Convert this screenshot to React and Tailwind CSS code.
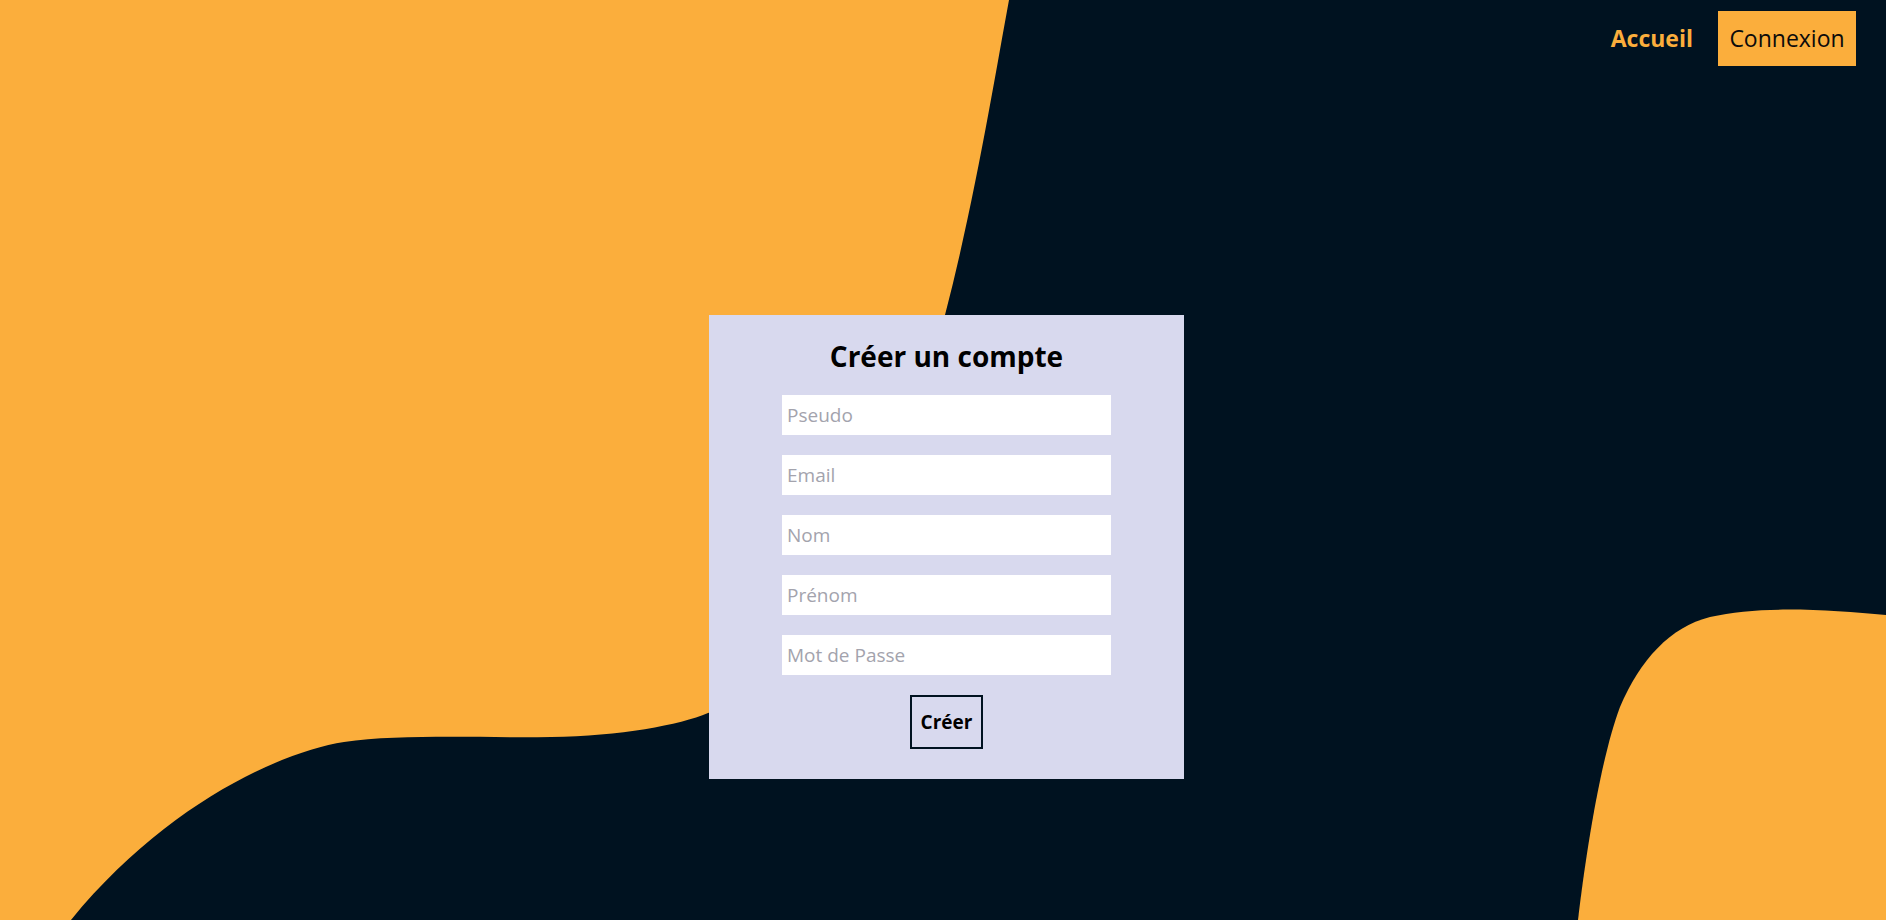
import React from 'react';

const fields = ['Pseudo', 'Email', 'Nom', 'Prénom', 'Mot de Passe'];

// Background waves (haikei-like shapes)
const Waves = () => (
  <svg
    className="absolute inset-0 h-full w-full"
    viewBox="0 0 1886 920"
    preserveAspectRatio="none"
  >
    <path
      fill="#FBAE3C"
      d="M0 0 H1009 C996 70 975 200 945 315 C900 500 800 690 708 713 C680 725 620 736 551 737 C480 738 400 734 344 742 C280 752 165 805 71 920 H0 Z"
    />
    <path
      fill="#FBAE3C"
      d="M1886 615 C1830 610 1760 605 1710 617 C1670 627 1640 660 1620 707 C1600 760 1585 860 1578 920 H1886 Z"
    />
  </svg>
);

export default function App() {
  return (
    <div
      className="relative h-[920px] w-full overflow-hidden bg-[#001220]"
      style={{ fontFamily: '"Open Sans", "Noto Sans", sans-serif' }}
    >
      <Waves />

      <div className="relative">
        {/* Nav */}
        <nav className="flex items-center justify-end gap-[25px] pr-[30px] pt-[11px]">
          <a href="#" className="text-[23px] font-bold text-[#FBAE3C]">
            Accueil
          </a>
          <a
            href="#"
            className="flex h-[55px] w-[138px] items-center justify-center bg-[#FBAE3C] text-[23px] text-[#0b0b0b]"
          >
            Connexion
          </a>
        </nav>

        {/* Form card */}
        <div className="mt-[249px] flex justify-center">
          <form className="ml-[7px] flex w-[475px] flex-col items-center bg-[#D8D9EE] pb-[30px] pt-[22px]">
            <h1 className="mb-[20px] text-[28px] font-bold leading-[38px] text-black">
              Créer un compte
            </h1>
            <div className="flex flex-col gap-[20px]">
              {fields.map((f) => (
                <input
                  key={f}
                  type={f === 'Mot de Passe' ? 'password' : 'text'}
                  placeholder={f}
                  className="h-[40px] w-[329px] bg-white px-[5px] text-[19px] outline-none placeholder:text-[#a3a3ad]"
                />
              ))}
            </div>
            <button
              type="button"
              className="mt-[20px] h-[54px] w-[73px] border-2 border-[#001220] text-[19px] font-bold text-black"
            >
              Créer
            </button>
          </form>
        </div>
      </div>
    </div>
  );
}
